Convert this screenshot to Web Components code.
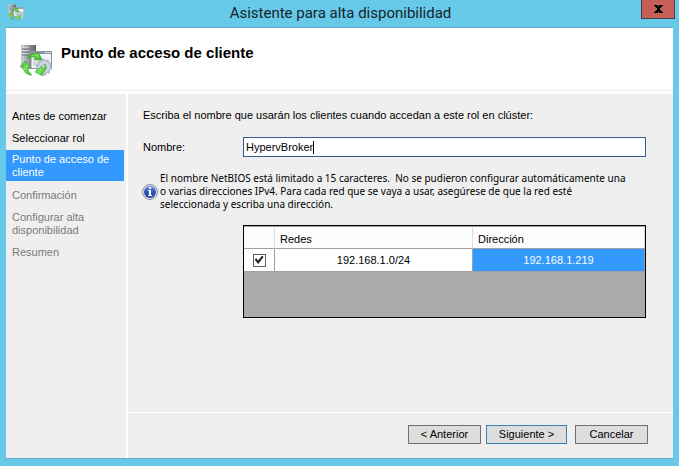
<!DOCTYPE html>
<html lang="es">
<head>
<meta charset="utf-8">
<title>Asistente para alta disponibilidad</title>
<style>
  html, body { height: 100%; }
  body { margin: 0; background: #66c9e8; }
</style>
</head>
<body>

<wizard-window caption="Asistente para alta disponibilidad">
  <wizard-header slot="header">Punto de acceso de cliente</wizard-header>
  <wizard-steps slot="steps">
    <wizard-step state="done">Antes de comenzar</wizard-step>
    <wizard-step state="done">Seleccionar rol</wizard-step>
    <wizard-step state="current">Punto de acceso de cliente</wizard-step>
    <wizard-step>Confirmación</wizard-step>
    <wizard-step>Configurar alta disponibilidad</wizard-step>
    <wizard-step>Resumen</wizard-step>
  </wizard-steps>
  <access-point-form name="HypervBroker">
    <span slot="intro">Escriba el nombre que usarán los clientes cuando accedan a este rol en clúster:</span>
    <info-note slot="note">El nombre NetBIOS está limitado a 15 caracteres.&nbsp; No se pudieron configurar automáticamente una o varias direcciones IPv4. Para cada red que se vaya a usar, asegúrese de que la red esté seleccionada y escriba una dirección.</info-note>
    <network-grid slot="grid" network="192.168.1.0/24" address="192.168.1.219"></network-grid>
  </access-point-form>
  <wizard-button slot="buttons">&lt; Anterior</wizard-button>
  <wizard-button slot="buttons" default>Siguiente &gt;</wizard-button>
  <wizard-button slot="buttons" class="cancel">Cancelar</wizard-button>
</wizard-window>

<script>
class ClusterIcon extends HTMLElement {
  constructor() {
    super();
    this.attachShadow({mode: 'open'});
    this.shadowRoot.innerHTML = `
      <style>
        :host { display: block; flex: none; width: 32px; height: 32px; }
        svg { display: block; width: 100%; height: 100%; }
      </style>
      <svg viewBox="0 0 32 32" aria-hidden="true">
        <defs>
          <linearGradient id="tower"><stop offset="0" stop-color="#b9bcc0"/><stop offset=".5" stop-color="#898d92"/><stop offset="1" stop-color="#5f6368"/></linearGradient>
          <linearGradient id="green" x2="1" y2="1"><stop offset="0" stop-color="#3fae2f"/><stop offset=".5" stop-color="#7be35a"/><stop offset="1" stop-color="#2fa824"/></linearGradient>
        </defs>
        <path d="M1 1h9v24H1z" fill="#c6c9cc"/>
        <path d="M4 1h12v24H4z" fill="url(#tower)"/>
        <path d="M2 4h7M2 7h7M2 10h7" stroke="#f0f2f3"/>
        <path d="M2 5h7M2 8h7M2 11h7" stroke="#606469"/>
        <path d="M11 7.500h20.500v17H11z" fill="#f2f4f5" stroke="#8a8f95"/>
        <path d="M11 7h21v3H11z" fill="#8d949d"/>
        <path d="M25 8.500h1.500M27.500 8.500H29M30 8.500h1" stroke="#fff"/>
        <path d="M13 13h5v9h-5z" fill="#d7dadd"/>
        <g fill="none" stroke="#a9b8c8">
          <circle cx="24" cy="23" r="7" stroke-width="2.500" stroke-dasharray="2.600 1.800"/>
          <circle cx="24" cy="23" r="5" stroke="#cbd7e4" stroke-width="4"/>
          <circle cx="24" cy="23" r="6.500" stroke="#8798aa" stroke-width=".6"/>
          <circle cx="24" cy="23" r="2.500" stroke="#8798aa" stroke-width=".8"/>
        </g>
        <path d="M8 14c2-4 6-5 9-4l1-2 4 8-8-1 2-2c-3-1-5 0-8 1z" fill="url(#green)" stroke="#38a72b" stroke-width="1"/>
        <path d="M5 17l6 7-3-1c0 4 1 6 4 8-6 0-9-4-9-9l-3 1z" fill="url(#green)" stroke="#38a72b" stroke-width=".6"/>
        <path d="M15 28l7-6v3c2-1 3-3 3-5 2 5 0 8-3 9l1 3z" fill="url(#green)" stroke="#38a72b" stroke-width=".6"/>
      </svg>
    `;
  }
}

class WizardWindow extends HTMLElement {
  constructor() {
    super();
    this.attachShadow({mode: 'open'});
    this.shadowRoot.innerHTML = `
      <style>
        :host {
          display: flex;
          flex-direction: column;
          min-height: 100%;
          background: #66c9e8;
          color: #000;
          font: 11px/13px "Liberation Sans", Arial, sans-serif;
        }
        .titlebar {
          display: grid;
          grid-template-columns: 34px 1fr 34px;
          align-items: start;
          height: 27px;
          padding: 0 4px 0 6px;
        }
        cluster-icon { width: 16px; height: 16px; margin: 4px 0 0 2px; }
        h1 {
          margin: 0;
          text-align: center;
          font: 15px/26px Roboto, "Open Sans", sans-serif;
          color: #16242b;
        }
        .close {
          width: 34px;
          height: 19px;
          padding: 0;
          border: 1px solid #44444c;
          border-top: 0;
          background: #c55f57;
          color: #000;
          display: grid;
          place-items: center;
        }
        .client {
          flex: 1;
          display: grid;
          grid-template-columns: 120px 1fr;
          grid-template-rows: auto 1fr auto;
          column-gap: 2px;
          margin: 0 6px 7px;
          background: #fff;
          border-top: 1px solid #62aac0;
          border-bottom: 1px solid #6badc1;
        }
        .header { grid-column: 1 / -1; }
        .steps { grid-row: 2 / 4; background: #efefef; }
        .page { background: #efefef; }
        .buttons {
          display: flex;
          justify-content: flex-end;
          gap: 5px;
          padding: 12px 25px 14px;
          border-top: 1px solid #fff;
          background: #efefef;
        }
        ::slotted(.cancel) { margin-left: 3px; }
      </style>
      <div class="titlebar">
        <cluster-icon></cluster-icon>
        <h1></h1>
        <button class="close" aria-label="Cerrar">
          <svg width="9" height="8" viewBox="0 0 9 8"><path d="M0 0h4v1h1V0h4v1H8v1H7v1H6v2h1v1h1v1h1v1H5V7H4v1H0V7h1V6h1V5h1V3H2V2H1V1H0z"/></svg>
        </button>
      </div>
      <div class="client">
        <div class="header"><slot name="header"></slot></div>
        <nav class="steps"><slot name="steps"></slot></nav>
        <main class="page"><slot></slot></main>
        <div class="buttons"><slot name="buttons"></slot></div>
      </div>
    `;
    this.shadowRoot.querySelector('h1').textContent = this.getAttribute('caption');
  }
}

class WizardHeader extends HTMLElement {
  constructor() {
    super();
    this.attachShadow({mode: 'open'});
    this.shadowRoot.innerHTML = `
      <style>
        :host {
          display: flex;
          gap: 9px;
          height: 62px;
          padding-left: 14px;
          margin-bottom: 3px;
          border-bottom: 1px solid #ececec;
          background: #fff;
        }
        cluster-icon { margin-top: 16px; }
        h2 { margin: 16px 0 0; font-size: 15px; line-height: 18px; }
      </style>
      <cluster-icon></cluster-icon>
      <h2><slot></slot></h2>
    `;
  }
}

class WizardSteps extends HTMLElement {
  constructor() {
    super();
    this.attachShadow({mode: 'open'});
    this.shadowRoot.innerHTML = `
      <style>
        :host { display: flex; flex-direction: column; padding: 11px 2px 0 0; }
      </style>
      <slot></slot>
    `;
  }
}

class WizardStep extends HTMLElement {
  constructor() {
    super();
    this.attachShadow({mode: 'open'});
    this.shadowRoot.innerHTML = `
      <style>
        :host { display: block; padding: 4px 12px 5px 6px; color: #7a7a7a; }
        :host([state="done"]) { color: #000; padding-top: 5px; padding-bottom: 4px; }
        :host([state="current"]) { background: #3399ff; color: #fff; padding: 3px 12px 2px 6px; margin: 1px 0 4px; }
      </style>
      <slot></slot>
    `;
    if (this.getAttribute('state') === 'current') {
      this.setAttribute('aria-current', 'step');
    }
  }
}

class AccessPointForm extends HTMLElement {
  constructor() {
    super();
    this.attachShadow({mode: 'open'});
    this.shadowRoot.innerHTML = `
      <style>
        :host { display: block; padding: 15px 27px 0 15px; }
        .row {
          display: grid;
          grid-template-columns: 100px 1fr;
          align-items: center;
          margin: 15px 0 15px;
        }
        .box {
          display: flex;
          align-items: center;
          height: 18px;
          padding-left: 2px;
          border: 1px solid #2f5d8f;
          background: #fff;
        }
        input {
          field-sizing: content;
          padding: 0;
          border: 0;
          outline: 0;
          background: none;
          color: inherit;
          font: inherit;
          caret-color: transparent;
        }
        .caret { width: 1px; height: 13px; background: #000; }
        .grid { margin: 14px 0 0 100px; }
      </style>
      <slot name="intro"></slot>
      <div class="row">
        <label for="name">Nombre:</label>
        <div class="box"><input id="name" type="text"><span class="caret"></span></div>
      </div>
      <slot name="note"></slot>
      <div class="grid"><slot name="grid"></slot></div>
    `;
    const input = this.shadowRoot.querySelector('input');
    input.value = this.getAttribute('name');
    this.shadowRoot.querySelector('.box').addEventListener('click', () => input.focus());
  }
}

class InfoNote extends HTMLElement {
  constructor() {
    super();
    this.attachShadow({mode: 'open'});
    this.shadowRoot.innerHTML = `
      <style>
        :host {
          display: flex;
          align-items: center;
          gap: 2px;
          padding-right: 16px;
          font-family: "Noto Sans", sans-serif;
          font-size: 10px;
        }
        svg { flex: none; width: 16px; height: 16px; margin-left: -1px; }
      </style>
      <svg viewBox="0 0 16 16" aria-hidden="true">
        <defs><linearGradient id="blue" x2="0" y2="1"><stop offset="0" stop-color="#7390dd"/><stop offset=".5" stop-color="#2d55c0"/><stop offset="1" stop-color="#2446aa"/></linearGradient></defs>
        <circle cx="8" cy="8" r="7.500" fill="#dcdfe6" stroke="#8b909b"/>
        <circle cx="8" cy="8" r="6" fill="url(#blue)"/>
        <path d="M7 3h2v2H7zM6 6h3v5h1v1H6v-1h1V7H6z" fill="#fff"/>
      </svg>
      <div><slot></slot></div>
    `;
  }
}

class NetworkGrid extends HTMLElement {
  constructor() {
    super();
    this.attachShadow({mode: 'open'});
    this.shadowRoot.innerHTML = `
      <style>
        :host {
          display: block;
          box-sizing: border-box;
          min-height: 93px;
          border: 1px solid #000;
          background: #ababab;
        }
        table { width: 100%; border-collapse: separate; border-spacing: 0; table-layout: fixed; }
        .check { width: 31px; }
        .address { width: 172px; }
        th, td { box-sizing: border-box; padding: 0; border-right: 1px solid #a0a0a0; border-bottom: 1px solid #a0a0a0; }
        th {
          height: 23px;
          padding: 3px 0 0 5px;
          border-top: 1px solid #a0a0a0;
          border-right-color: #dcdcdc;
          background: #fcfcfc;
          font-weight: normal;
          text-align: left;
        }
        td { height: 23px; background: #fff; text-align: center; }
        td.selected { background: #3399ff; color: #fff; }
        input {
          appearance: none;
          display: grid;
          place-items: center;
          width: 13px;
          height: 13px;
          margin: 0 auto;
          border: 1px solid #606060;
          background: #fff;
        }
        input:checked::before {
          content: "";
          width: 9px;
          height: 9px;
          background: #222;
          clip-path: polygon(0 45%, 20% 30%, 40% 55%, 85% 0, 100% 18%, 42% 95%);
        }
      </style>
      <table>
        <colgroup><col class="check"><col><col class="address"></colgroup>
        <thead><tr><th></th><th>Redes</th><th>Dirección</th></tr></thead>
        <tbody><tr><td><input type="checkbox" aria-labelledby="network" checked></td><td id="network"></td><td class="selected"></td></tr></tbody>
      </table>
    `;
    this.shadowRoot.querySelector('#network').textContent = this.getAttribute('network');
    this.shadowRoot.querySelector('.selected').textContent = this.getAttribute('address');
  }
}

class WizardButton extends HTMLElement {
  constructor() {
    super();
    this.attachShadow({mode: 'open'});
    this.shadowRoot.innerHTML = `
      <style>
        :host { display: block; }
        button {
          display: block;
          box-sizing: border-box;
          width: 73px;
          height: 19px;
          padding: 0;
          border: 1px solid #707070;
          background: #dddddd;
          color: inherit;
          font: inherit;
        }
        :host([default]) button { width: 81px; border-color: #3c7fb1; }
      </style>
      <button type="button"><slot></slot></button>
    `;
  }
}

customElements.define('cluster-icon', ClusterIcon);
customElements.define('wizard-window', WizardWindow);
customElements.define('wizard-header', WizardHeader);
customElements.define('wizard-steps', WizardSteps);
customElements.define('wizard-step', WizardStep);
customElements.define('access-point-form', AccessPointForm);
customElements.define('info-note', InfoNote);
customElements.define('network-grid', NetworkGrid);
customElements.define('wizard-button', WizardButton);
</script>
</body>
</html>
